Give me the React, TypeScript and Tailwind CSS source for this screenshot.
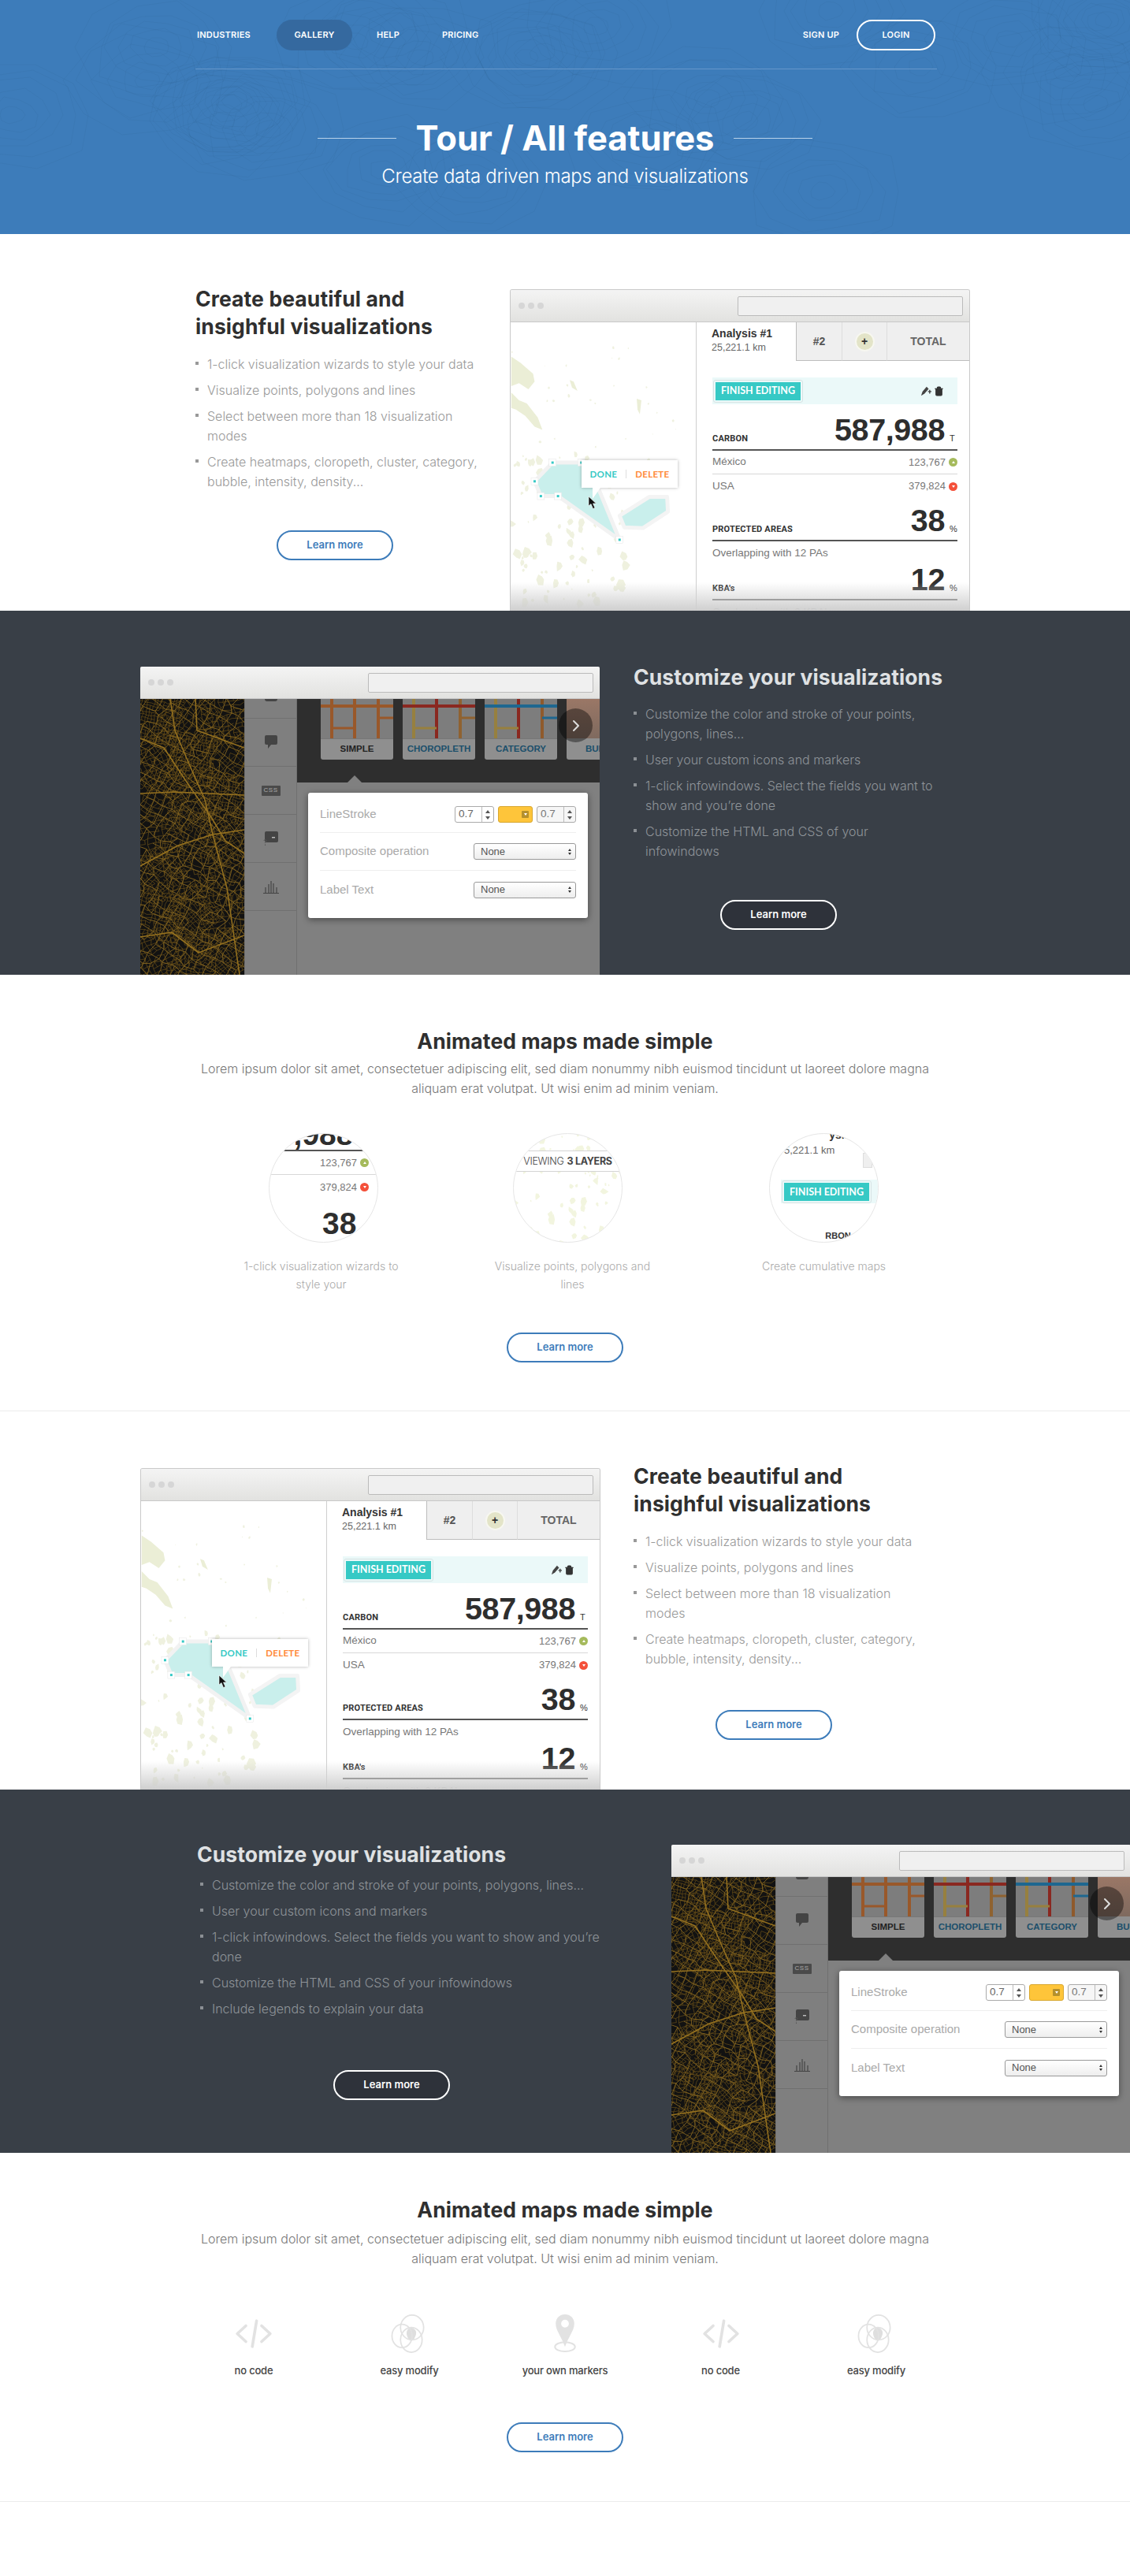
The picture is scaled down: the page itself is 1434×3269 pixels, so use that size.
import React from "react";
import { Trash2, ChevronRight } from "lucide-react";

function rng(seed: number) {
  let s = seed;
  return () => {
    s = (s * 1664525 + 1013904223) % 4294967296;
    return s / 4294967296;
  };
}

function lattice(r: () => number, sp: number, ang: number, x0: number, y0: number, w: number, h: number, drop: number) {
  let d = "";
  const nx = Math.ceil(w / sp), ny = Math.ceil(h / sp);
  const c = Math.cos(ang), s = Math.sin(ang);
  const pts: number[][][] = [];
  for (let i = 0; i <= nx; i++) {
    pts[i] = [];
    for (let j = 0; j <= ny; j++) {
      const u = i * sp - w / 2 + (r() - 0.5) * sp * 0.6, v = j * sp - h / 2 + (r() - 0.5) * sp * 0.6;
      pts[i][j] = [x0 + u * c - v * s, y0 + u * s + v * c];
    }
  }
  for (let i = 0; i <= nx; i++) {
    for (let j = 0; j <= ny; j++) {
      const p = pts[i][j];
      if (i < nx && r() > drop) d += `M${p[0].toFixed(1)} ${p[1].toFixed(1)}L${pts[i + 1][j][0].toFixed(1)} ${pts[i + 1][j][1].toFixed(1)}`;
      if (j < ny && r() > drop) d += `M${p[0].toFixed(1)} ${p[1].toFixed(1)}L${pts[i][j + 1][0].toFixed(1)} ${pts[i][j + 1][1].toFixed(1)}`;
    }
  }
  return d;
}

const cityData = (() => {
  const r = rng(11);
  let thin = "";
  const cols = 3, rows = 7;
  for (let i = 0; i < cols; i++) {
    for (let j = 0; j < rows; j++) {
      thin += lattice(r, 4 + ((i * 3 + j * 5) % 4), 0.2 + ((i * 2 + j * 3) % 5) * 0.3, 22 + i * 44, 25 + j * 50, 56, 60, 0.18);
    }
  }
  const mid = lattice(r, 12, 0.55, 66, 175, 300, 460, 0.1);
  const thick = "M0 50L30 62L62 110L90 150L108 180L132 196M0 212L48 186L92 172L132 166M38 0L44 40L60 78L82 128L92 172L110 240L126 350M0 302L40 296L74 322L132 300M0 120L42 118L132 122M70 0L72 40L132 62";
  return { thin, mid, thick };
})();

const blobs = (() => {
  const r = rng(21);
  const out: string[] = [];
  const add = (x: number, y: number, sz: number) => {
    let d = "";
    const k = 6;
    for (let i = 0; i < k; i++) {
      const a = (i / k) * 6.283;
      const m = sz * (0.5 + r() * 0.7);
      d += `${i ? "L" : "M"}${(x + Math.cos(a) * m).toFixed(1)} ${(y + Math.sin(a) * m * 1.3).toFixed(1)}`;
    }
    out.push(d + "Z");
  };
  for (let i = 0; i < 110; i++) add(r() * 150, 170 + r() * 200, 1 + r() * 4.6);
  for (let i = 0; i < 34; i++) add(r() * 215, 30 + r() * 190, 0.5 + r() * 1.8);
  return out.join("");
})();

const contours = (() => {
  const r = rng(3);
  let d = "";
  for (let c = 0; c < 26; c++) {
    const cx = r() * 1434, cy = r() * 297;
    for (let k = 1; k < 7; k++) {
      const R = k * 16;
      d += `M${(cx + R).toFixed(0)} ${cy.toFixed(0)}`;
      for (let i = 1; i <= 10; i++) {
        const a = (i / 10) * 6.283;
        const m = i === 10 ? R : R * (0.85 + r() * 0.3);
        d += `L${(cx + Math.cos(a) * m).toFixed(0)} ${(cy + Math.sin(a) * m * 0.7).toFixed(0)}`;
      }
    }
  }
  return d;
})();

function LightMap() {
  return (
    <svg viewBox="0 0 236 370" className="absolute inset-0 h-full w-full">
      <path d="M0 44L12 52L28 66L30 76L22 86L10 78L0 82ZM0 90L10 100L20 104L34 122L40 138L30 134L18 120L6 112L0 110ZM75 74L80 76L85 88L78 84ZM161 98L167 100L165 118L162 112Z" fill="#ebeed6" />
      <path d={blobs} fill="#eff1df" />
      <path d="M53 180L90 180L108 204L139 279L60 223L38 223L30 204Z" fill="#c9efec" stroke="#f2f2f2" strokeWidth="5" strokeLinejoin="round" />
      <path d="M177 224L200 224L201 243L169 264L145 263L139 248Z" fill="#c9efec" stroke="#f4f4f4" strokeWidth="5" strokeLinejoin="round" />
      {[[53, 180], [90, 180], [30, 204], [38, 223], [60, 223], [139, 279]].map(([x, y]) => (
        <g key={x}>
          <rect x={x - 4.5} y={y - 4.5} width="9" height="9" fill="#ffffff" stroke="#e4e4e4" strokeWidth="0.5" />
          <rect x={x - 1.5} y={y - 1.5} width="3" height="3" fill="#36c9c5" />
        </g>
      ))}
    </svg>
  );
}

function Cursor({ className }: { className: string }) {
  return (
    <svg viewBox="0 0 12 18" className={className}>
      <path d="M1 1L1 13L4 10.5L6.5 16.5L9 15.5L6.5 10L10.5 10Z" fill="#111" stroke="#fff" strokeWidth="0.6" />
    </svg>
  );
}

function Metric({ label, value, unit, top, children }: { label: string; value: string; unit: string; top: string; children?: React.ReactNode }) {
  return (
    <div>
      <div className={`flex items-end justify-between border-b-[2px] border-[#555] pb-[7px] ${top}`}>
        <span className="text-[11px] leading-[13px] font-bold tracking-[0.2px] text-[#333] font-['Roboto',sans-serif]">{label}</span>
        <span className="flex items-end">
          <span className="text-[39.5px] leading-[36px] font-bold tracking-[-0.4px] text-[#2e2e2e]">{value}</span>
          <span className="ml-[6px] w-[10px] text-[11px] leading-[13px] font-normal text-[#333]">{unit}</span>
        </span>
      </div>
      {children}
    </div>
  );
}

function Dot({ color, up }: { color: string; up?: boolean }) {
  return (
    <span className={`ml-[4px] flex h-[11px] w-[11px] items-center justify-center rounded-full ${color}`}>
      <span className={`h-0 w-0 border-x-[2px] border-x-transparent ${up ? "border-b-[3px] border-b-white" : "border-t-[3px] border-t-white"}`} />
    </span>
  );
}

function PenIcon({ className }: { className: string }) {
  return (
    <svg viewBox="0 0 16 16" className={className}>
      <path d="M1 15L3 9L9 2L12 5L6 12Z" fill="#444" />
      <path d="M11 9H16M13.5 6.500V12" stroke="#444" strokeWidth="1.6" />
    </svg>
  );
}

function AnalysisPanel() {
  return (
    <div className="flex min-w-0 flex-1 flex-col border-l border-[#cfcfcf] bg-white font-['Liberation_Sans',sans-serif]">
      <div className="flex h-[49px] shrink-0">
        <div className="w-[126px] pl-[19px] pt-[5px]">
          <div className="text-[14px] leading-[18px] font-bold text-[#333]">Analysis #1</div>
          <div className="text-[12.5px] leading-[18px] text-[#666]">25,221.1 km</div>
        </div>
        <div className="flex w-[58px] items-center justify-center border-b border-l border-[#bdbdbd] bg-[#efefef] text-[14px] font-bold text-[#555]">#2</div>
        <div className="flex w-[57px] items-center justify-center border-b border-l border-b-[#bdbdbd] border-l-[#ddd] bg-[#efefef]">
          <span className="flex h-[25px] w-[25px] items-center justify-center rounded-full border-2 border-[#f7f7f0] bg-[#e3e4c8] text-[14px] leading-none font-bold text-[#333]">+</span>
        </div>
        <div className="flex flex-1 items-center justify-center border-b border-l border-b-[#bdbdbd] border-l-[#ddd] bg-[#efefef] text-[14px] font-bold text-[#666]">TOTAL</div>
      </div>
      <div className="ml-[20px] mr-[15px]">
        <div className="mt-[21px] flex h-[34px] items-center justify-between bg-[#ebf9f9] pr-[17px]">
          <span className="ml-[1px] flex h-[29px] w-[114px] items-center justify-center rounded-[3px] border border-[#d7e3e4] bg-[#36c9c5] bg-clip-content p-[2px] text-[12.5px] font-bold text-white font-['Lato',sans-serif]">FINISH EDITING</span>
          <span className="flex items-center gap-[3px]">
            <PenIcon className="h-[14px] w-[14px]" />
            <Trash2 className="h-[15px] w-[13px] fill-[#333] text-[#333]" />
          </span>
        </div>
        <Metric label="CARBON" value="587,988" unit="T" top="h-[59px]">
          <div className="flex h-[30px] items-center justify-between border-b border-[#d8d8d8] text-[13.5px] text-[#777]">
            <span>México</span>
            <span className="flex items-center text-[13px]">123,767<Dot color="bg-[#a5ba5c]" up /></span>
          </div>
          <div className="flex h-[30px] items-center justify-between text-[13.5px] text-[#777]">
            <span>USA</span>
            <span className="flex items-center text-[13px]">379,824<Dot color="bg-[#f4503a]" /></span>
          </div>
        </Metric>
        <Metric label="PROTECTED AREAS" value="38" unit="%" top="h-[55px]">
          <div className="flex h-[30px] items-center text-[13.5px] text-[#777]">Overlapping with 12 PAs</div>
        </Metric>
        <Metric label="KBA's" value="12" unit="%" top="h-[45px]">
          <div className="flex h-[30px] items-center text-[13.5px] text-[#777]">Overlapping with 3 KBA's</div>
        </Metric>
      </div>
    </div>
  );
}

function TitleBar() {
  return (
    <div className="flex h-[41px] shrink-0 items-center justify-between border-b border-[#c8c8c8] bg-gradient-to-b from-[#f4f4f4] to-[#e2e2e0] pl-[10px] pr-[8px]">
      <div className="flex gap-[4px]">
        <span className="h-[8px] w-[8px] rounded-full bg-[#d6d6d6]" />
        <span className="h-[8px] w-[8px] rounded-full bg-[#d6d6d6]" />
        <span className="h-[8px] w-[8px] rounded-full bg-[#d6d6d6]" />
      </div>
      <div className="h-[25px] w-[286px] rounded-[2px] border border-[#bbbbbb] bg-[#f0f0f0]" />
    </div>
  );
}

function AnalysisBrowser({ className }: { className: string }) {
  return (
    <div className={`relative flex h-[408px] w-[584px] shrink-0 flex-col overflow-hidden rounded-t-[3px] border-x border-t border-[#c9c9c9] bg-white ${className}`}>
      <TitleBar />
      <div className="flex min-h-0 flex-1">
        <div className="relative w-[235px] shrink-0">
          <LightMap />
          <div className="absolute left-[90px] top-[175px] flex h-[35px] w-[122px] items-center justify-center bg-white text-[11.5px] font-bold tracking-[0.3px] shadow-[0_0_4px_rgba(0,0,0,0.3)] font-['Lato',sans-serif]">
            <span className="text-[#36c9c5]">DONE</span>
            <span className="mx-[11px] h-[11px] w-px bg-[#ddd]" />
            <span className="text-[#ff8b3b]">DELETE</span>
            <span className="absolute left-[14px] top-[35px] h-0 w-0 border-r-[10px] border-t-[14px] border-r-transparent border-t-white" />
          </div>
          <Cursor className="absolute left-[98px] top-[220px] h-[18px] w-[12px]" />
        </div>
        <AnalysisPanel />
      </div>
      <div className="absolute inset-x-0 bottom-0 h-[36px] bg-gradient-to-b from-[#ffffff00] to-[#cfcfcf]" />
    </div>
  );
}

function Thumb({ h, v, s, t }: { h: string; v: string[]; s: string; t: string }) {
  return (
    <svg viewBox="0 0 92 50" className="h-[50px] w-[92px] shrink-0">
      <rect width="92" height="50" fill="#7d7d7d" />
      <path d="M14 0V50" stroke={v[0]} strokeWidth="4" />
      <path d="M43 0V50" stroke={v[1]} strokeWidth="4" />
      <path d="M73 0V50" stroke={v[2]} strokeWidth="4" />
      <path d="M73 24H92" stroke={s} strokeWidth="3" />
      <path d="M14 37H43" stroke={t} strokeWidth="3" />
      <path d="M0 9H92" stroke={h} strokeWidth="4" />
    </svg>
  );
}

function Card({ label, color, thumb }: { label: string; color: string; thumb: React.ReactNode }) {
  return (
    <div className="flex h-[77px] w-[92px] shrink-0 flex-col overflow-hidden rounded-b-[3px] bg-[#8f8f8f]">
      {thumb}
      <div className={`flex flex-1 items-center justify-center border-t border-[#777] text-[11.5px] font-bold whitespace-nowrap ${color}`}>{label}</div>
    </div>
  );
}

function Spinner() {
  return (
    <span className="flex h-full w-[15px] flex-col items-center justify-center gap-[4px] border-l border-[#bbb]">
      <span className="h-0 w-0 border-x-[3px] border-b-[4px] border-x-transparent border-b-[#555]" />
      <span className="h-0 w-0 border-x-[3px] border-t-[4px] border-x-transparent border-t-[#555]" />
    </span>
  );
}

function SelectBox() {
  return (
    <div className="flex h-[21px] w-[130px] items-center justify-between rounded-[3px] border border-[#999] bg-gradient-to-b from-white to-[#eeeeee] pl-[8px] pr-[5px] text-[13px] text-[#555]">
      <span>None</span>
      <span className="flex flex-col gap-[2px]">
        <span className="h-0 w-0 border-x-[2.500px] border-b-[3px] border-x-transparent border-b-[#333]" />
        <span className="h-0 w-0 border-x-[2.500px] border-t-[3px] border-x-transparent border-t-[#333]" />
      </span>
    </div>
  );
}

function DarkBrowser({ className }: { className: string }) {
  return (
    <div className={`flex h-[391px] w-[583px] shrink-0 flex-col overflow-hidden rounded-t-[2px] bg-[#808080] ${className}`}>
      <TitleBar />
      <div className="flex min-h-0 flex-1 font-['Liberation_Sans',sans-serif]">
        <svg viewBox="0 0 132 350" preserveAspectRatio="none" className="h-full w-[132px] shrink-0 bg-[#121212]">
          <path d={cityData.thin} stroke="#77591a" strokeWidth="0.6" fill="none" />
          <path d={cityData.mid} stroke="#846520" strokeWidth="0.9" fill="none" />
          <path d={cityData.thick} stroke="#94701f" strokeWidth="1.6" fill="none" />
        </svg>
        <div className="w-[67px] shrink-0 border-x border-[#707070] bg-[#7f7f7f]">
          <div className="flex h-[25px] justify-center border-b border-[#707070]"><span className="h-[3px] w-[16px] rounded-b-[3px] bg-[#444]" /></div>
          <div className="flex h-[61px] items-center justify-center border-b border-[#707070]">
            <svg viewBox="0 0 18 20" className="h-[20px] w-[18px]"><path d="M3 1H15Q17 1 17 3V11Q17 13 15 13H9L5 18V13H3Q1 13 1 11V3Q1 1 3 1Z" fill="#444" /></svg>
          </div>
          <div className="flex h-[61px] items-center justify-center border-b border-[#707070]">
            <span className="flex h-[13px] w-[24px] items-center justify-center rounded-[1px] bg-[#4a4a4a] text-[8px] leading-none tracking-[0.5px] text-[#aaa]">CSS</span>
          </div>
          <div className="flex h-[61px] items-center justify-center border-b border-[#707070]">
            <svg viewBox="0 0 20 18" className="h-[18px] w-[20px]"><rect x="2" y="0" width="17" height="14" rx="2" fill="#444" /><rect x="11" y="7" width="4" height="1.500" fill="#bbb" /><path d="M1 12C1 10 4 10 4 12C4 13.500 2.500 13.500 2.500 15M2.500 16.500V18" stroke="#555" strokeWidth="1" fill="none" /></svg>
          </div>
          <div className="flex h-[61px] items-center justify-center border-b border-[#707070]">
            <svg viewBox="0 0 20 18" className="h-[18px] w-[20px]"><path d="M0 17.500H20M3 17V10M7 17V6M10 17V2M13 17V5M17 17V10" stroke="#444" strokeWidth="1.200" /></svg>
          </div>
        </div>
        <div className="relative flex min-w-0 flex-1 flex-col">
          <div className="relative flex h-[106px] shrink-0 gap-[12px] overflow-hidden bg-[#2e2e2e] pl-[30px]">
            <Card label="SIMPLE" color="text-[#222]" thumb={<Thumb h="#99582a" v={["#99582a", "#99582a", "#99582a"]} s="#99582a" t="#99582a" />} />
            <Card label="CHOROPLETH" color="text-[#1c4f6b]" thumb={<Thumb h="#8a2820" v={["#97803f", "#8a2820", "#8f6230"]} s="#8f6230" t="#97803f" />} />
            <Card label="CATEGORY" color="text-[#1c4f6b]" thumb={<Thumb h="#1e6790" v={["#97803f", "#8a2820", "#8f5a2c"]} s="#1e6790" t="#97803f" />} />
            <div className="flex h-[77px] w-[92px] shrink-0 flex-col overflow-hidden rounded-b-[3px] bg-[#8f8f8f]">
              <div className="h-[50px] bg-gradient-to-b from-[#9a7766] to-[#7f6a5f]" />
              <div className="flex flex-1 items-center pl-[24px] text-[11.5px] font-bold text-[#1c4f6b]">BUBBLE</div>
            </div>
            <span className="absolute left-[332px] top-[12px] flex h-[43px] w-[43px] items-center justify-center rounded-full bg-[#00000066] text-[#ddd]"><ChevronRight className="h-[24px] w-[24px]" /></span>
            <span className="absolute bottom-0 left-[64px] h-0 w-0 border-x-[9px] border-b-[9px] border-x-transparent border-b-[#808080]" />
          </div>
          <div className="ml-[14px] mt-[13px] h-[159px] w-[355px] rounded-[3px] bg-white px-[15px] pt-[17px] shadow-[0_2px_8px_rgba(0,0,0,0.45)]">
            <div className="flex h-[34px] items-start justify-between border-b border-[#eeeeee]">
              <span className="text-[15px] leading-[20px] text-[#aaa]">LineStroke</span>
              <div className="flex gap-[5px]">
                <div className="flex h-[21px] w-[50px] items-center justify-between rounded-[3px] border border-[#aaa] pl-[4px] text-[13.5px] text-[#666]">0.7<Spinner /></div>
                <div className="flex h-[21px] w-[44px] items-center justify-end rounded-[3px] border border-[#d8a72f] bg-[#fec53a] pr-[4px]">
                  <span className="flex h-[9px] w-[9px] items-center justify-center rounded-[1px] bg-[#b5902c]"><span className="h-0 w-0 border-x-[2px] border-t-[3px] border-x-transparent border-t-white" /></span>
                </div>
                <div className="flex h-[21px] w-[50px] items-center justify-between rounded-[3px] border border-[#aaa] bg-[#f6f6f6] pl-[4px] text-[13.5px] text-[#777]">0.7<Spinner /></div>
              </div>
            </div>
            <div className="flex h-[48px] items-center justify-between border-b border-[#eeeeee]">
              <span className="text-[15px] text-[#aaa]">Composite operation</span>
              <SelectBox />
            </div>
            <div className="flex h-[48px] items-center justify-between">
              <span className="text-[15px] text-[#aaa]">Label Text</span>
              <SelectBox />
            </div>
          </div>
        </div>
      </div>
    </div>
  );
}

function Bullets({ items, dark, className }: { items: string[]; dark?: boolean; className: string }) {
  return (
    <ul className={`flex flex-col gap-[8px] ${className}`}>
      {items.map((t) => (
        <li key={t} className={`relative pl-[15px] text-[16px] leading-[25px] font-light ${dark ? "text-[#8f9499]" : "text-[#999999]"}`}>
          <span className={`absolute left-0 top-[9px] h-[4px] w-[4px] ${dark ? "bg-[#8b8f94]" : "bg-[#999]"}`} />
          {t}
        </li>
      ))}
    </ul>
  );
}

function LearnMore({ dark, className }: { dark?: boolean; className: string }) {
  return (
    <div className={`flex h-[38px] w-[148px] shrink-0 items-center justify-center rounded-full border-2 text-[13px] font-semibold ${dark ? "border-white bg-[#2e323a] text-white" : "border-[#3d7cba] bg-white text-[#3d7cba]"} ${className}`}>
      Learn more
    </div>
  );
}

const Heading = ({ children, className }: { children: React.ReactNode; className: string }) => (
  <h2 className={`text-[26.5px] leading-[35px] font-bold tracking-[0.1px] ${className}`}>{children}</h2>
);

const LOREM1 = "Lorem ipsum dolor sit amet, consectetuer adipiscing elit, sed diam nonummy nibh euismod tincidunt ut laoreet dolore magna";
const LOREM2 = "aliquam erat volutpat. Ut wisi enim ad minim veniam.";

const listA = [
  "1-click visualization wizards to style your data",
  "Visualize points, polygons and lines",
  "Select between more than 18 visualization modes",
  "Create heatmaps, cloropeth, cluster, category, bubble, intensity, density...",
];

function CircleStats() {
  return (
    <div className="ml-[6px] h-[139px] w-[139px] overflow-hidden rounded-full border border-[#e6e6e6] font-['Liberation_Sans',sans-serif]">
      <div className="ml-[18px] mr-[18px] flex h-[22px] items-end justify-center overflow-hidden border-b-[2px] border-[#555]">
        <span className="mb-[4px] text-[39px] leading-[30px] font-bold text-[#2e2e2e]">,988</span>
      </div>
      <div className="flex h-[30px] items-center justify-end border-b border-[#d8d8d8] pr-[11px] text-[13px] text-[#777]">123,767<Dot color="bg-[#a5ba5c]" up /></div>
      <div className="flex h-[30px] items-center justify-end pr-[11px] text-[13px] text-[#777]">379,824<Dot color="bg-[#f4503a]" /></div>
      <div className="flex h-[50px] items-end justify-start pl-[67px]">
        <span className="text-[39px] leading-[36px] font-bold text-[#2e2e2e]">38</span>
      </div>
      <div className="ml-[43px] mt-[6px] h-[2px] w-[52px] bg-[#555]" />
    </div>
  );
}

function CircleLayers() {
  return (
    <div className="relative h-[139px] w-[139px] overflow-hidden rounded-full border border-[#e6e6e6]">
      <svg viewBox="0 170 139 139" className="absolute inset-0 h-full w-full opacity-40"><path d={blobs} fill="#dfe5ae" /></svg>
      <div className="relative mt-[21px] flex h-[27px] items-center justify-center border-y border-[#d4d4d4] bg-white text-[12.5px] tracking-[-0.3px] text-[#444]">
        <span className="font-light">VIEWING</span><span className="ml-[4px] font-bold">3 LAYERS</span>
      </div>
    </div>
  );
}

function CircleFinish() {
  return (
    <div className="h-[139px] w-[139px] overflow-hidden rounded-full border border-[#e6e6e6] font-['Liberation_Sans',sans-serif]">
      <div className="mt-[-7px] flex h-[17px] justify-center pl-[60px] text-[14px] leading-[17px] font-bold text-[#333]">ysis #1</div>
      <div className="flex h-[20px] items-center pl-[18px] text-[13px] text-[#666]">5,221.1 km</div>
      <div className="flex h-[28px] justify-end pr-[7px]"><span className="mt-[-6px] h-[19px] w-[12px] border border-[#ddd] bg-[#efefef]" /></div>
      <div className="ml-[14px] flex h-[30px] items-center bg-[#ebf9f9] pl-[1px]">
        <span className="flex h-[29px] w-[114px] items-center justify-center rounded-[3px] border border-[#d7e3e4] bg-[#36c9c5] bg-clip-content p-[2px] text-[12.5px] font-bold text-white font-['Lato',sans-serif]">FINISH EDITING</span>
      </div>
      <div className="mt-[30px] pl-[36px] text-[11px] font-bold text-[#333]">RBON</div>
    </div>
  );
}

function CodeIcon() {
  return (
    <svg viewBox="0 0 52 54" className="h-[49px] w-[50px]" fill="none" stroke="#e2e2e2" strokeWidth="4" strokeLinecap="round" strokeLinejoin="round">
      <path d="M15 16L3 27L15 38" />
      <path d="M37 16L49 27L37 38" />
      <path d="M30 9L24 45" />
    </svg>
  );
}

function VennIcon() {
  return (
    <svg viewBox="0 0 50 50" className="h-[49px] w-[50px]">
      <path d="M27 17C34 19 35 24 31 31C28 35 25 35 23 31C19 24 21 18 27 17Z" fill="#dedede" />
      <g fill="none" stroke="#e2e2e2" strokeWidth="1.800">
        <ellipse cx="28" cy="17" rx="15" ry="16" />
        <ellipse cx="15" cy="28" rx="13" ry="15" />
        <ellipse cx="27" cy="33" rx="14" ry="16" />
      </g>
    </svg>
  );
}

function PinIcon() {
  return (
    <svg viewBox="0 0 50 50" className="h-[49px] w-[50px]">
      <path d="M25 0C18 0 13 5 13 12C13 21 20 28 25 42C30 28 37 21 37 12C37 5 32 0 25 0ZM25 7A5 5 0 1 1 25 17A5 5 0 1 1 25 7Z" fill="#e2e2e2" fillRule="evenodd" />
      <ellipse cx="25" cy="42" rx="13" ry="6" fill="none" stroke="#e2e2e2" strokeWidth="2" />
    </svg>
  );
}

function IconItem({ icon, label }: { icon: React.ReactNode; label: string }) {
  return (
    <div className="flex w-[197.5px] flex-col items-center">
      {icon}
      <span className="mt-[12px] text-[13px] leading-[20px] font-medium tracking-[-0.2px] text-[#444]">{label}</span>
    </div>
  );
}

export default function App() {
  return (
    <div className="h-[3269px] w-[1434px] overflow-hidden bg-white text-[#333] font-['Inter',sans-serif]">
      <header className="relative h-[297px] overflow-hidden bg-[#3d7cba] text-white">
        <svg viewBox="0 0 1434 297" className="absolute inset-0 h-full w-full"><path d={contours} fill="none" stroke="#000" strokeOpacity="0.03" /></svg>
        <div className="relative ml-[248px] w-[941px]">
          <nav className="flex h-[88px] items-start border-b border-[#6697ca] pt-[25px] text-[11px] font-semibold tracking-[0.2px] uppercase">
            <span className="flex h-[39px] w-[103px] items-center pl-[2px]">Industries</span>
            <span className="flex h-[39px] w-[96px] items-center justify-center rounded-full bg-[#35699f]">Gallery</span>
            <span className="flex h-[39px] w-[83px] items-center pl-[31px]">Help</span>
            <span className="flex h-[39px] items-center pl-[31px]">Pricing</span>
            <span className="ml-auto flex h-[39px] items-center">Sign up</span>
            <span className="ml-[22px] mr-[2px] flex h-[39px] w-[100px] items-center justify-center rounded-full border-2 border-white">Login</span>
          </nav>
        </div>
        <div className="relative mt-[62px] flex items-center justify-center gap-[25px]">
          <span className="h-px w-[100px] bg-[#b9d2ea]" />
          <h1 className="text-[43.5px] leading-[50px] font-bold">Tour / All features</h1>
          <span className="h-px w-[100px] bg-[#b9d2ea]" />
        </div>
        <p className="relative mt-[8px] text-center text-[24px] leading-[32px] font-light tracking-[-0.3px]">Create data driven maps and visualizations</p>
      </header>

      <section className="flex h-[478px] overflow-hidden pl-[248px]">
        <div className="w-[399px] shrink-0 pt-[65px]">
          <Heading className="text-[#2f2f2f]">Create beautiful and<br />insighful visualizations</Heading>
          <Bullets items={listA} className="mt-[18px] w-[365px]" />
          <LearnMore className="ml-[103px] mt-[49px]" />
        </div>
        <AnalysisBrowser className="mt-[70px]" />
      </section>

      <section className="flex h-[462px] overflow-hidden bg-[#393f47] pl-[178px]">
        <DarkBrowser className="mt-[71px]" />
        <div className="ml-[43px] w-[400px] shrink-0 pt-[67px]">
          <Heading className="text-[#dfe1e3]">Customize your visualizations</Heading>
          <Bullets dark className="mt-[17px] w-[382px]" items={[
            "Customize the color and stroke of your points, polygons, lines...",
            "User your custom icons and markers",
            "1-click infowindows. Select the fields you want to show and you’re done",
            "Customize the HTML and CSS of your infowindows",
          ]} />
          <LearnMore dark className="ml-[110px] mt-[49px]" />
        </div>
      </section>

      <section className="flex h-[554px] flex-col items-center border-b border-[#ececec] pt-[67px]">
        <Heading className="text-[#2f2f2f]">Animated maps made simple</Heading>
        <p className="mt-[5px] text-center text-[16px] leading-[25px] font-light text-[#777]">{LOREM1}<br />{LOREM2}</p>
        <div className="ml-[19px] mt-[44px] grid w-[957px] grid-cols-3 text-center text-[14px] leading-[23px] font-light text-[#aaa]">
          <div className="flex flex-col items-center"><CircleStats /><p className="mt-[18px] w-[210px]">1-click visualization wizards to style your</p></div>
          <div className="flex flex-col items-center"><div className="mr-[12px]"><CircleLayers /></div><p className="mt-[18px] w-[210px]">Visualize points, polygons and lines</p></div>
          <div className="flex flex-col items-center"><CircleFinish /><p className="mt-[18px] w-[210px]">Create cumulative maps</p></div>
        </div>
        <LearnMore className="mt-[50px]" />
      </section>

      <section className="flex h-[480px] overflow-hidden pl-[178px]">
        <AnalysisBrowser className="mt-[72px]" />
        <div className="ml-[42px] w-[370px] shrink-0 pt-[65px]">
          <Heading className="text-[#2f2f2f]">Create beautiful and<br />insighful visualizations</Heading>
          <Bullets items={listA} className="mt-[18px] w-[365px]" />
          <LearnMore className="ml-[104px] mt-[52px]" />
        </div>
      </section>

      <section className="flex h-[461px] overflow-hidden bg-[#393f47] pl-[250px]">
        <div className="w-[602px] shrink-0 pt-[65px]">
          <Heading className="text-[#dfe1e3]">Customize your visualizations</Heading>
          <Bullets dark className="ml-[4px] mt-[9px] w-[510px]" items={[
            "Customize the color and stroke of your points, polygons, lines...",
            "User your custom icons and markers",
            "1-click infowindows. Select the fields you want to show and you’re done",
            "Customize the HTML and CSS of your infowindows",
            "Include legends to explain your data",
          ]} />
          <LearnMore dark className="ml-[173px] mt-[65px]" />
        </div>
        <DarkBrowser className="mt-[70px]" />
      </section>

      <section className="flex h-[443px] flex-col items-center border-b border-[#ececec] pt-[55px]">
        <Heading className="text-[#2f2f2f]">Animated maps made simple</Heading>
        <p className="mt-[7px] text-center text-[16px] leading-[25px] font-light text-[#777]">{LOREM1}<br />{LOREM2}</p>
        <div className="mt-[58px] flex justify-center">
          <IconItem icon={<CodeIcon />} label="no code" />
          <IconItem icon={<VennIcon />} label="easy modify" />
          <IconItem icon={<PinIcon />} label="your own markers" />
          <IconItem icon={<CodeIcon />} label="no code" />
          <IconItem icon={<VennIcon />} label="easy modify" />
        </div>
        <LearnMore className="mt-[56px]" />
      </section>
    </div>
  );
}
